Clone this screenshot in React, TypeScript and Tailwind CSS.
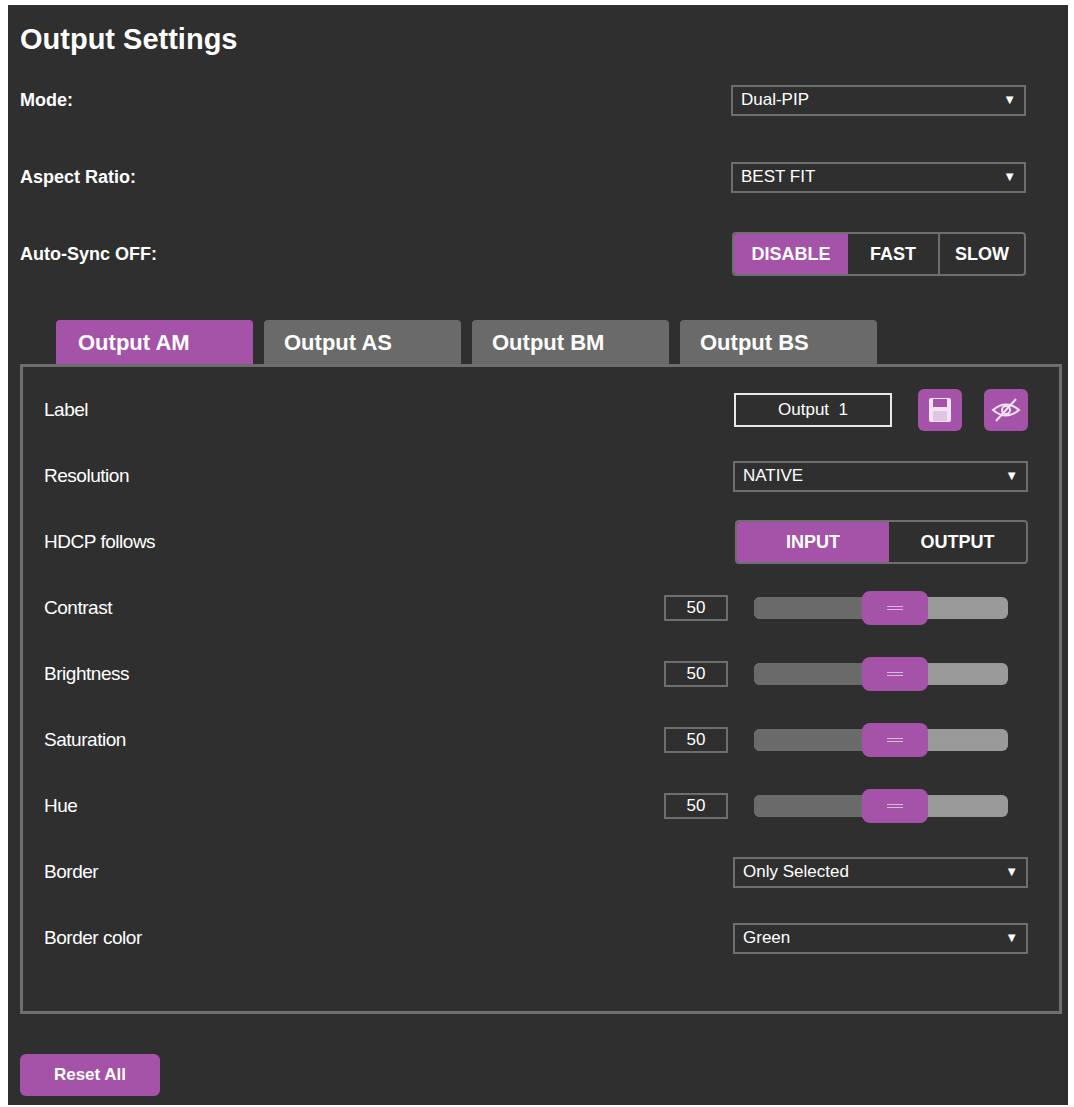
const purple = "bg-[#a553a8]";

function Select({ value }: { value: string }) {
  return (
    <div className="w-[295px] h-[31px] border-2 border-[#6e6e6e] flex items-center justify-between pl-2 pr-2 text-[17px] text-white">
      <span>{value}</span>
      <span className="text-[13px]">▼</span>
    </div>
  );
}

function Slider() {
  return (
    <div className="flex items-center gap-[26px]">
      <div className="w-[64px] h-[26px] border-2 border-[#6e6e6e] flex items-center justify-center text-[17px] text-white">50</div>
      <div className="relative w-[254px] h-[22px] rounded-md bg-[#9a9a9a] flex">
        <div className="w-[108px] h-full rounded-l-md bg-[#6a6a6a]" />
        <div className={`absolute left-[108px] top-[-6px] w-[66px] h-[34px] rounded-lg ${purple} flex flex-col items-center justify-center gap-[2px]`}>
          <div className="w-[16px] h-px bg-[#d9b6da]" />
          <div className="w-[16px] h-px bg-[#d9b6da]" />
        </div>
      </div>
    </div>
  );
}

function Row({ label, children }: { label: string; children?: React.ReactNode }) {
  return (
    <div className="flex items-center justify-between h-[66px]">
      <span className="text-[19px] text-white tracking-tight">{label}</span>
      {children}
    </div>
  );
}

export default function App() {
  return (
    <div className="w-[1074px] h-[1107px] bg-white pt-[5px] pl-[8px]" style={{ fontFamily: '"Liberation Sans", Arial, sans-serif' }}>
      <div className="w-[1060px] h-[1100px] bg-[#2f2f2f] pl-[12px] pr-[4px] pt-[12px]">
        <h1 className="text-[29px] font-bold text-white leading-none mt-[8px]">Output Settings</h1>
        <div className="mt-[31px] flex flex-col gap-[47px] pr-[38px]">
          <div className="flex items-center justify-between h-[30px]">
            <span className="text-[18px] font-bold text-white">Mode:</span>
            <Select value="Dual-PIP" />
          </div>
          <div className="flex items-center justify-between h-[30px]">
            <span className="text-[18px] font-bold text-white">Aspect Ratio:</span>
            <Select value="BEST FIT" />
          </div>
          <div className="flex items-center justify-between h-[30px]">
            <span className="text-[18px] font-bold text-white">Auto-Sync OFF:</span>
            <div className="flex h-[44px] border-2 border-[#6e6e6e] rounded text-[18px] font-bold text-white overflow-hidden">
              <div className={`${purple} w-[114px] flex items-center justify-center`}>DISABLE</div>
              <div className="w-[92px] flex items-center justify-center border-r-2 border-[#6e6e6e]">FAST</div>
              <div className="w-[84px] flex items-center justify-center">SLOW</div>
            </div>
          </div>
        </div>
        <div className="mt-[51px] flex gap-[11px] pl-[36px]">
          <div className={`w-[197px] h-[44px] ${purple} text-white text-[22px] font-bold flex items-center pl-[22px] rounded-t`}>Output AM</div>
          {["Output AS", "Output BM", "Output BS"].map((t) => (
            <div key={t} className="w-[197px] h-[44px] bg-[#6a6a6a] text-white text-[22px] font-bold flex items-center pl-[20px] rounded-t">{t}</div>
          ))}
        </div>
        <div className="w-[1042px] h-[650px] border-[3px] border-[#6e6e6e] pl-[21px] pr-[31px] pt-[10px]">
          <Row label="Label">
            <div className="flex items-center gap-[26px]">
              <div className="w-[158px] h-[34px] border-2 border-[#e8e8e8] flex items-center justify-center text-[17px] text-white">Output&nbsp; 1</div>
              <div className="flex gap-[22px]">
                <div className={`w-[44px] h-[42px] ${purple} rounded-md flex items-center justify-center`}>
                  <svg width="24" height="26" viewBox="0 0 24 26">
                    <rect x="1" y="1" width="22" height="24" rx="2" fill="#f3e4f3" />
                    <rect x="5" y="2" width="14" height="8" fill="#a553a8" />
                    <rect x="5" y="14" width="14" height="10" fill="#e0c6e1" />
                  </svg>
                </div>
                <div className={`w-[44px] h-[42px] ${purple} rounded-md flex items-center justify-center`}>
                  <svg width="30" height="26" viewBox="0 0 30 26" fill="none" stroke="#f3e4f3" strokeWidth="2">
                    <path d="M2 13 Q15 2 28 13 Q15 24 2 13Z" />
                    <circle cx="15" cy="13" r="4" />
                    <path d="M25 2 L5 24" />
                  </svg>
                </div>
              </div>
            </div>
          </Row>
          <Row label="Resolution"><Select value="NATIVE" /></Row>
          <Row label="HDCP follows">
            <div className="flex w-[293px] h-[44px] border-2 border-[#6e6e6e] rounded text-[18px] font-bold text-white overflow-hidden">
              <div className={`${purple} w-[152px] flex items-center justify-center`}>INPUT</div>
              <div className="flex-1 flex items-center justify-center">OUTPUT</div>
            </div>
          </Row>
          <Row label="Contrast"><div className="pr-[20px]"><Slider /></div></Row>
          <Row label="Brightness"><div className="pr-[20px]"><Slider /></div></Row>
          <Row label="Saturation"><div className="pr-[20px]"><Slider /></div></Row>
          <Row label="Hue"><div className="pr-[20px]"><Slider /></div></Row>
          <Row label="Border"><Select value="Only Selected" /></Row>
          <Row label="Border color"><Select value="Green" /></Row>
        </div>
        <div className={`mt-[40px] w-[140px] h-[42px] ${purple} rounded-md text-white text-[17px] font-bold flex items-center justify-center`}>Reset All</div>
      </div>
    </div>
  );
}
